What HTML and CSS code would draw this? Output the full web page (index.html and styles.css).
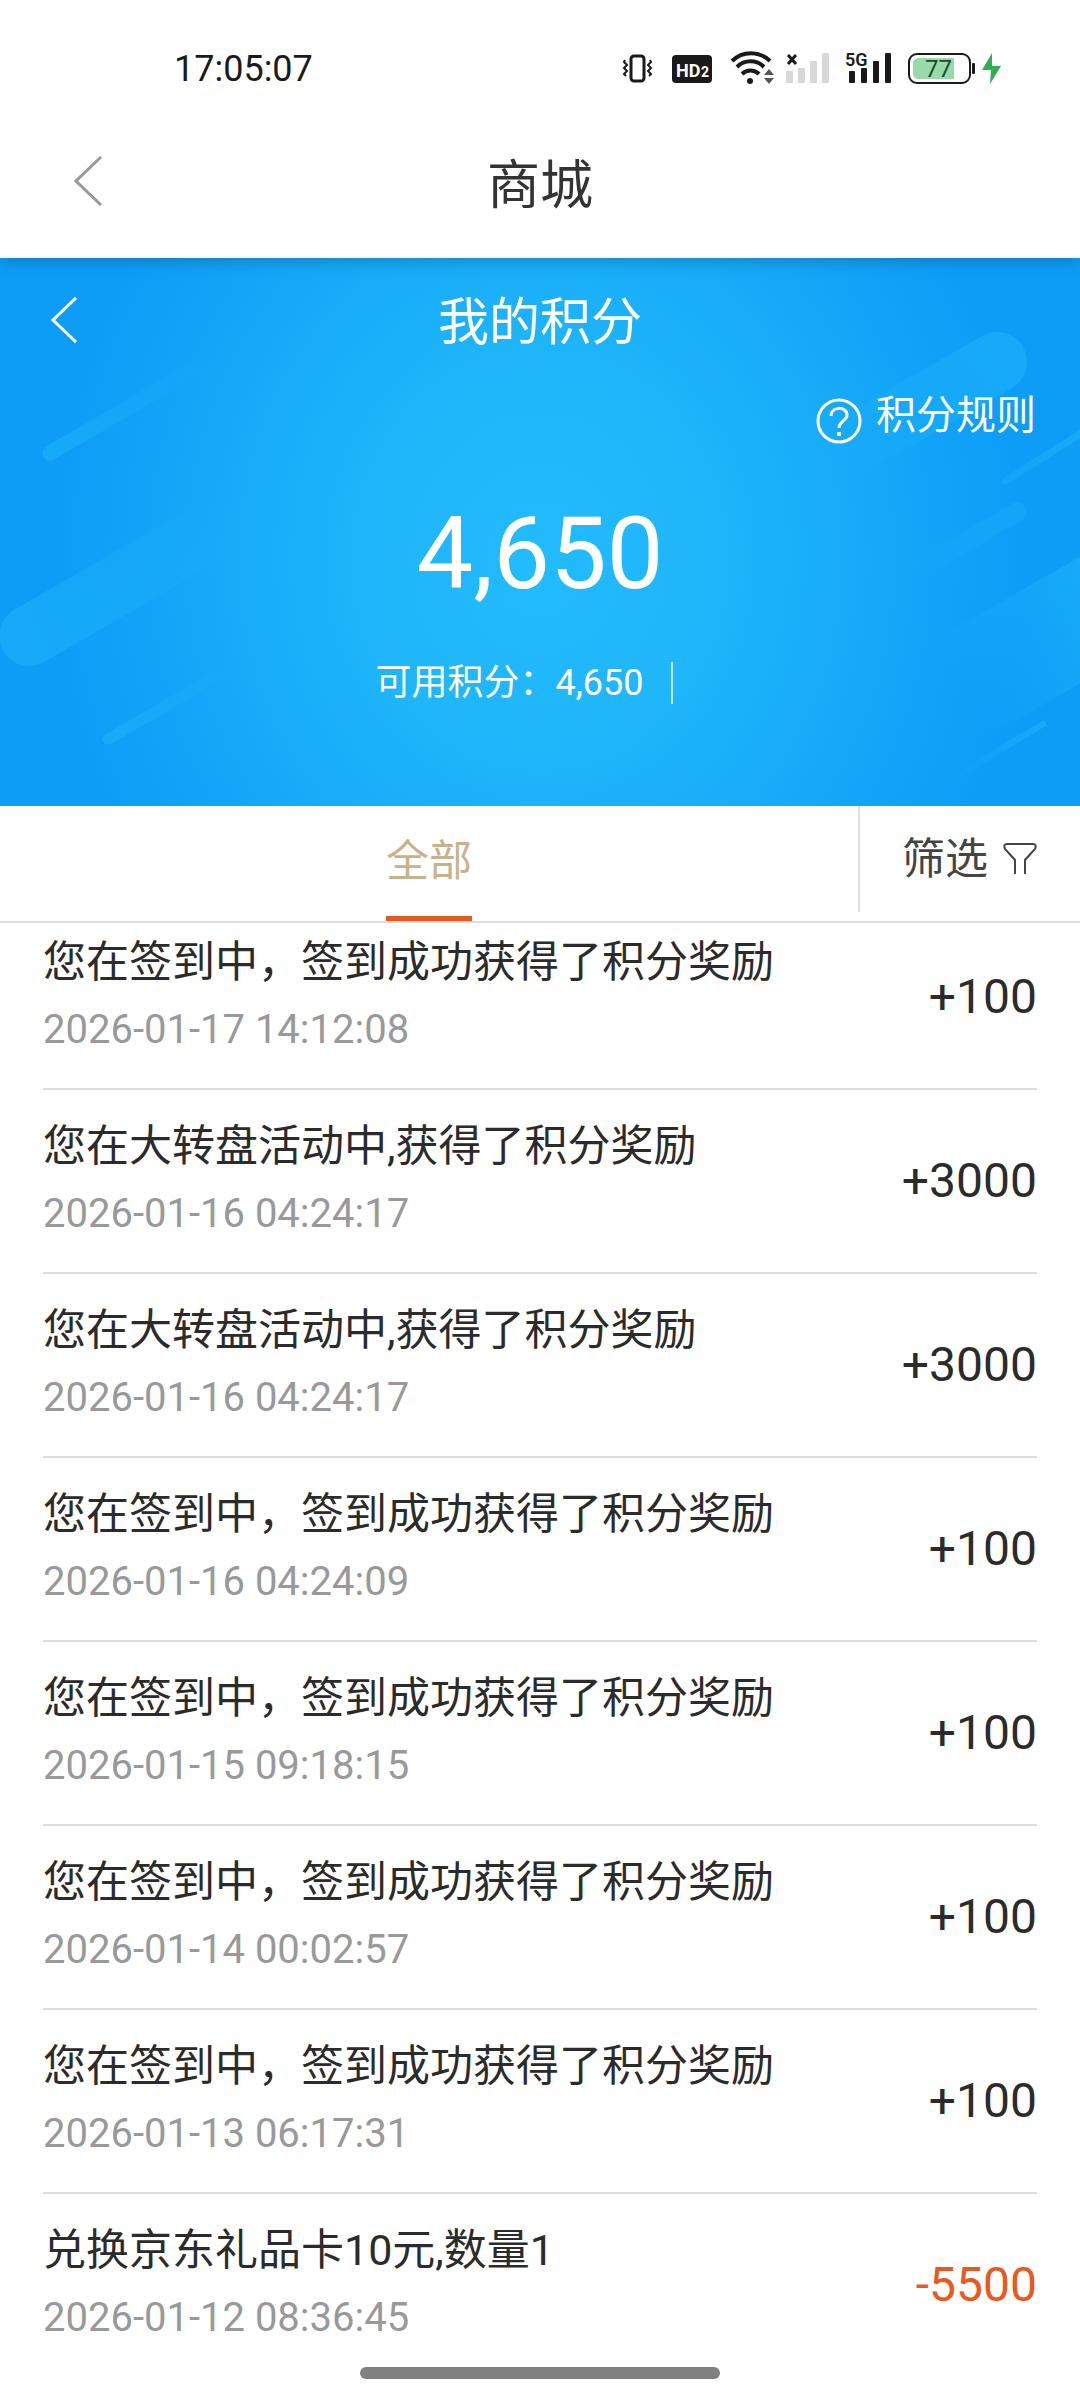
FILE: index.html
```html
<!DOCTYPE html>
<html lang="zh-CN">
<head>
    <meta charset="UTF-8">
    <meta name="viewport" content="width=device-width, initial-scale=1.0">
    <title>商城 - 我的积分</title>
    <link rel="stylesheet" href="styles.css">
</head>
<body>
    <div class="status-bar">
        <span class="clock">17:05:07</span>
        <div class="status-icons">
            <!-- vibrate -->
            <svg width="38" height="36" viewBox="0 0 38 36">
                <rect x="9" y="6" width="13" height="25" rx="3" fill="none" stroke="#1a1a1a" stroke-width="3"/>
                <path d="M3 10l-1 2 3 3-3 3 3 3-3 3 2 2M28 10l1 2-3 3 3 3-3 3 3 3-2 2" fill="none" stroke="#1a1a1a" stroke-width="2"/>
            </svg>
            <!-- HD 2 -->
            <svg width="46" height="36" viewBox="0 0 46 36">
                <rect x="0" y="5" width="40" height="28" rx="4" fill="#1a1a1a"/>
                <text x="4" y="27" class="hd">HD</text>
                <text x="29" y="27" class="hd-small">2</text>
            </svg>
            <!-- wifi -->
            <svg width="44" height="36" viewBox="0 0 44 36">
                <path d="M2 11a27 27 0 0 1 38 0M7 17a19 19 0 0 1 27 0M12 24a12 12 0 0 1 17 0" fill="none" stroke="#1a1a1a" stroke-width="4"/>
                <circle cx="20" cy="31" r="3" fill="#1a1a1a"/>
                <path d="M34 25l5-6 5 6zM34 28l5 6 5-6z" fill="#555"/>
            </svg>
            <!-- sim 1, no signal -->
            <svg width="47" height="36" viewBox="0 0 47 36">
                <path d="M2 5l8 9M10 5l-8 9" stroke="#1a1a1a" stroke-width="3"/>
                <g fill="#d8d8d8">
                    <rect x="0" y="21" width="7" height="12" rx="1"/>
                    <rect x="12" y="18" width="7" height="15" rx="1"/>
                    <rect x="24" y="11" width="7" height="22" rx="1"/>
                    <rect x="36" y="3" width="7" height="30" rx="1"/>
                </g>
            </svg>
            <!-- sim 2, 5G -->
            <svg width="51" height="36" viewBox="0 0 51 36">
                <text x="0" y="16" class="net">5G</text>
                <g fill="#1a1a1a">
                    <rect x="4" y="21" width="6" height="12" rx="1"/>
                    <rect x="16" y="18" width="6" height="15" rx="1"/>
                    <rect x="28" y="11" width="6" height="22" rx="1"/>
                    <rect x="40" y="3" width="6" height="30" rx="1"/>
                </g>
            </svg>
            <!-- battery -->
            <svg width="94" height="36" viewBox="0 0 94 36">
                <rect x="1" y="4" width="61" height="29" rx="8" fill="#fff" stroke="#1a1a1a" stroke-width="2"/>
                <path d="M10 8h36v21H10a5 5 0 0 1-5-5V13a5 5 0 0 1 5-5z" fill="#98dba9"/>
                <rect x="64" y="13" width="3" height="11" rx="1" fill="#1a1a1a"/>
                <text x="17" y="27" class="charge">77</text>
                <path d="M84 3L74 20h9l-1 14 11-18h-9z" fill="#2fae54"/>
            </svg>
        </div>
    </div>

    <header class="app-header">
        <button class="back-btn" aria-label="返回">
            <svg width="28" height="50" viewBox="0 0 28 50"><path d="M27 1L2 25l25 24" fill="none" stroke="#999" stroke-width="3"/></svg>
        </button>
        <h1 class="app-title">商城</h1>
    </header>

    <section class="hero">
        <svg class="hero-bg" viewBox="0 0 1080 548" preserveAspectRatio="none" aria-hidden="true">
            <defs>
                <linearGradient id="up1" gradientUnits="userSpaceOnUse" x1="50" y1="195" x2="210" y2="100"><stop offset="0" stop-color="#1fb8fb" stop-opacity=".5"/><stop offset="1" stop-color="#1fb8fb" stop-opacity="0"/></linearGradient>
                <linearGradient id="up2" gradientUnits="userSpaceOnUse" x1="28" y1="378" x2="230" y2="262"><stop offset="0" stop-color="#1fb8fb" stop-opacity=".5"/><stop offset="1" stop-color="#1fb8fb" stop-opacity="0"/></linearGradient>
                <linearGradient id="up3" gradientUnits="userSpaceOnUse" x1="108" y1="481" x2="240" y2="405"><stop offset="0" stop-color="#1fb8fb" stop-opacity=".5"/><stop offset="1" stop-color="#1fb8fb" stop-opacity="0"/></linearGradient>
                <linearGradient id="down1" gradientUnits="userSpaceOnUse" x1="997" y1="104" x2="830" y2="200"><stop offset="0" stop-color="#1fb8fb" stop-opacity=".5"/><stop offset="1" stop-color="#1fb8fb" stop-opacity="0"/></linearGradient>
                <linearGradient id="down2" gradientUnits="userSpaceOnUse" x1="1090" y1="190" x2="900" y2="300"><stop offset="0" stop-color="#1fb8fb" stop-opacity=".5"/><stop offset="1" stop-color="#1fb8fb" stop-opacity="0"/></linearGradient>
                <linearGradient id="down3" gradientUnits="userSpaceOnUse" x1="1100" y1="350" x2="960" y2="430"><stop offset="0" stop-color="#1fb8fb" stop-opacity=".5"/><stop offset="1" stop-color="#1fb8fb" stop-opacity="0"/></linearGradient>
                <linearGradient id="down4" gradientUnits="userSpaceOnUse" x1="1043" y1="466" x2="950" y2="522"><stop offset="0" stop-color="#1fb8fb" stop-opacity=".5"/><stop offset="1" stop-color="#1fb8fb" stop-opacity="0"/></linearGradient>
            </defs>
            <g fill="none" stroke-linecap="round">
                <path d="M50 195L210 102" stroke="url(#up1)" stroke-width="15"/>
                <path d="M29 378L230 262" stroke="url(#up2)" stroke-width="60"/>
                <path d="M108 481L240 405" stroke="url(#up3)" stroke-width="11"/>
                <path d="M997 104L830 200" stroke="url(#down1)" stroke-width="60"/>
                <path d="M1090 170L1005 223" stroke="url(#down2)" stroke-width="7"/>
                <path d="M1017 254L900 322" stroke="url(#down2)" stroke-width="19"/>
                <path d="M1110 345L960 431" stroke="url(#down3)" stroke-width="110"/>
                <path d="M1043 466L950 522" stroke="url(#down4)" stroke-width="6"/>
            </g>
        </svg>
        <div class="hero-nav">
            <button class="back-btn" aria-label="返回">
                <svg width="28" height="46" viewBox="0 0 28 46"><path d="M26 1L3 23l23 22" fill="none" stroke="#fff" stroke-width="3"/></svg>
            </button>
            <h2 class="hero-title">我的积分</h2>
        </div>
        <a class="rules" href="#rules">
            <svg width="46" height="46" viewBox="0 0 46 46" fill="none" stroke="#fff">
                <circle cx="23" cy="23" r="21" stroke-width="3"/>
                <path d="M15 18c0-10 16-10 16-1 0 6-8 6-8 13" stroke-width="3"/>
                <path d="M21 36h4" stroke-width="4"/>
            </svg>
            <span>积分规则</span>
        </a>
        <div class="points">4,650</div>
        <div class="points-detail">
            <span class="available">可用积分：4,650</span>
        </div>
    </section>

    <nav class="tabs">
        <div class="tab-list">
            <button class="tab active">全部</button>
        </div>
        <button class="filter-btn">
            <span>筛选</span>
            <svg width="34" height="34" viewBox="0 0 34 34"><path d="M12 32V18L2 7Q0 2 4 2h26q4 0 2 5L22 18v14" fill="none" stroke="#444" stroke-width="2"/></svg>
        </button>
    </nav>

    <ul class="records">
        <li class="record">
            <div class="info">
                <p class="title">您在签到中，签到成功获得了积分奖励</p>
                <p class="date">2026-01-17 14:12:08</p>
            </div>
            <span class="amount">+100</span>
        </li>
        <li class="record">
            <div class="info">
                <p class="title">您在大转盘活动中,获得了积分奖励</p>
                <p class="date">2026-01-16 04:24:17</p>
            </div>
            <span class="amount">+3000</span>
        </li>
        <li class="record">
            <div class="info">
                <p class="title">您在大转盘活动中,获得了积分奖励</p>
                <p class="date">2026-01-16 04:24:17</p>
            </div>
            <span class="amount">+3000</span>
        </li>
        <li class="record">
            <div class="info">
                <p class="title">您在签到中，签到成功获得了积分奖励</p>
                <p class="date">2026-01-16 04:24:09</p>
            </div>
            <span class="amount">+100</span>
        </li>
        <li class="record">
            <div class="info">
                <p class="title">您在签到中，签到成功获得了积分奖励</p>
                <p class="date">2026-01-15 09:18:15</p>
            </div>
            <span class="amount">+100</span>
        </li>
        <li class="record">
            <div class="info">
                <p class="title">您在签到中，签到成功获得了积分奖励</p>
                <p class="date">2026-01-14 00:02:57</p>
            </div>
            <span class="amount">+100</span>
        </li>
        <li class="record">
            <div class="info">
                <p class="title">您在签到中，签到成功获得了积分奖励</p>
                <p class="date">2026-01-13 06:17:31</p>
            </div>
            <span class="amount">+100</span>
        </li>
        <li class="record">
            <div class="info">
                <p class="title">兑换京东礼品卡10元,数量1</p>
                <p class="date">2026-01-12 08:36:45</p>
            </div>
            <span class="amount minus">-5500</span>
        </li>
    </ul>

    <div class="home-indicator"></div>
</body>
</html>
```

FILE: styles.css
```css
* {
    box-sizing: border-box;
}
body {
    margin: 0;
    background-color: #fff;
    color: #2b2b2b;
    font-family: Roboto, "Noto Sans CJK SC", sans-serif;
}
h1, h2, p, ul {
    margin: 0;
    padding: 0;
    font-weight: 400;
}
button {
    padding: 0;
    border: none;
    background: none;
    color: inherit;
    font-family: inherit;
    cursor: pointer;
}
svg {
    display: block;
}

/* status bar */
.status-bar {
    position: relative;
    z-index: 2;
    display: flex;
    justify-content: space-between;
    align-items: center;
    height: 108px;
    padding: 30px 78px 0 174px;
    background-color: #fff;
}
.clock {
    font-size: 36px;
    line-height: 78px;
    color: #1a1a1a;
}
.status-icons {
    display: flex;
    gap: 12px;
    padding-bottom: 2px;
}
.hd {
    font-size: 18px;
    font-weight: 700;
    fill: #fff;
}
.hd-small {
    font-size: 14px;
    font-weight: 700;
    fill: #fff;
}
.net {
    font-size: 18px;
    font-weight: 600;
    fill: #1a1a1a;
}
.charge {
    font-size: 24px;
    fill: #1f4a2b;
}

/* app header */
.app-header {
    position: relative;
    z-index: 1;
    display: grid;
    grid-template-columns: 102px 1fr 102px;
    align-items: center;
    height: 150px;
    background-color: #fff;
    box-shadow: 0 2px 16px rgba(0, 0, 0, 0.25);
}
.app-header .back-btn {
    justify-self: end;
    padding-bottom: 4px;
}
.app-title {
    padding-top: 6px;
    font-size: 53px;
    line-height: 76px;
    text-align: center;
    color: #333;
}

/* points summary */
.hero {
    position: relative;
    height: 548px;
    background: radial-gradient(ellipse 45% 100% at 50% 55%, #22bbfc 0%, #1fb6fa 35%, #0d9df7 100%);
    color: #fff;
}
.hero-bg {
    position: absolute;
    top: 0;
    left: 0;
    width: 100%;
    height: 100%;
}
.hero > :not(.hero-bg) {
    position: relative;
}
.hero-nav {
    display: grid;
    grid-template-columns: 78px 1fr 78px;
    align-items: center;
    height: 124px;
}
.hero-nav .back-btn {
    justify-self: end;
}
.hero-title {
    padding-top: 6px;
    font-size: 51px;
    line-height: 76px;
    text-align: center;
}
.rules {
    display: flex;
    justify-content: flex-end;
    align-items: flex-end;
    gap: 14px;
    height: 62px;
    padding-right: 44px;
    color: #fff;
    font-size: 40px;
    line-height: 56px;
    text-decoration: none;
}
.points {
    margin-top: 50px;
    font-size: 101px;
    line-height: 120px;
    text-align: center;
}
.points-detail {
    display: flex;
    justify-content: center;
    margin-top: 48px;
    padding-right: 32px;
}
.available {
    padding-right: 27px;
    border-right: 2px solid rgba(255, 255, 255, 0.7);
    font-size: 36px;
    line-height: 42px;
}

/* tabs */
.tabs {
    display: flex;
    height: 117px;
    border-bottom: 2px solid #ddd;
}
.tab-list {
    flex: 1;
    display: flex;
    justify-content: center;
}
.tab {
    border-bottom: 5px solid #e65a20;
    font-size: 43px;
    line-height: 60px;
}
.tab.active {
    color: #c9b18c;
}
.filter-btn {
    display: flex;
    justify-content: flex-end;
    align-items: center;
    gap: 15px;
    width: 222px;
    height: 106px;
    padding-right: 43px;
    border-left: 2px solid #ddd;
    color: #444;
    font-size: 43px;
    line-height: 60px;
}

/* records */
.records {
    padding: 0 43px;
    list-style: none;
}
.record {
    display: flex;
    justify-content: space-between;
    align-items: center;
    padding: 23px 0;
    border-bottom: 2px solid #ddd;
}
.record:first-child {
    padding-top: 6px;
}
.record:last-child {
    border-bottom: none;
}
.title {
    font-size: 43px;
    line-height: 66px;
}
.date {
    font-size: 40px;
    line-height: 70px;
    color: #999;
}
.amount {
    font-size: 48px;
    line-height: 66px;
}
.amount.minus {
    color: #e9581e;
}

.home-indicator {
    position: fixed;
    right: 0;
    bottom: 21px;
    left: 0;
    width: 360px;
    height: 12px;
    margin: 0 auto;
    border-radius: 6px;
    background-color: #808080;
}
```
